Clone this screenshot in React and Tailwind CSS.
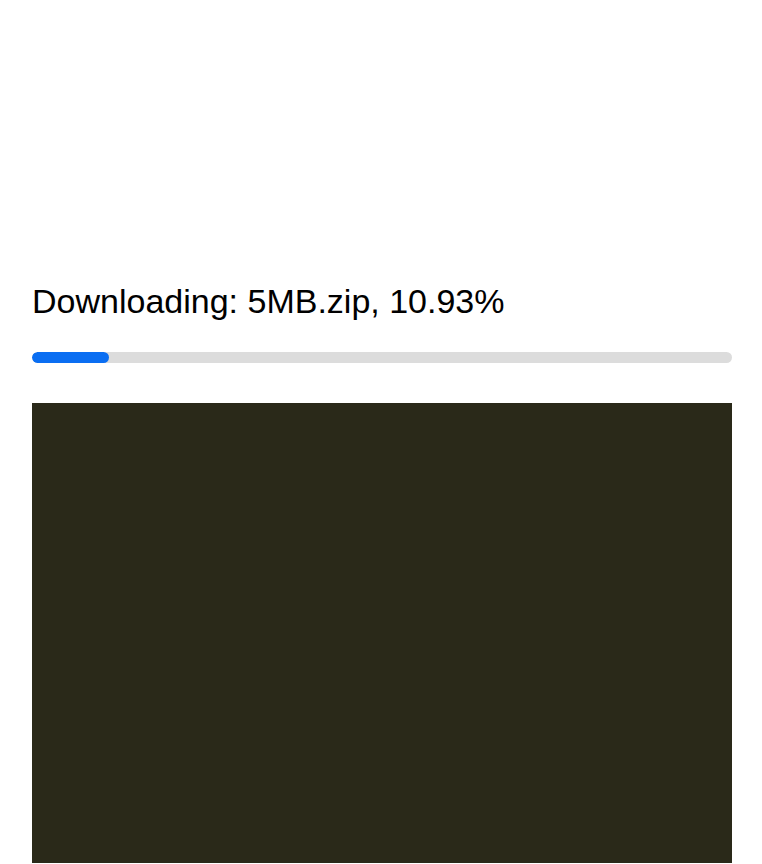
export default function App() {
  const progress = 10.93
  return (
    <div className="min-h-screen bg-white pl-8 pr-[30px] pt-[281px]" style={{ fontFamily: '"Liberation Sans", Arial, sans-serif' }}>
      <p className="text-[34px] leading-[40px] text-black">Downloading: 5MB.zip, 10.93%</p>
      <div className="mt-[31px] h-[11px] w-full overflow-hidden rounded-full bg-[#dcdcdc]">
        <div className="h-full rounded-full bg-[#0a6ef2]" style={{ width: `${progress}%` }} />
      </div>
      <div className="mt-[40px] h-[460px] w-full bg-[#2a2919]" />
    </div>
  )
}
